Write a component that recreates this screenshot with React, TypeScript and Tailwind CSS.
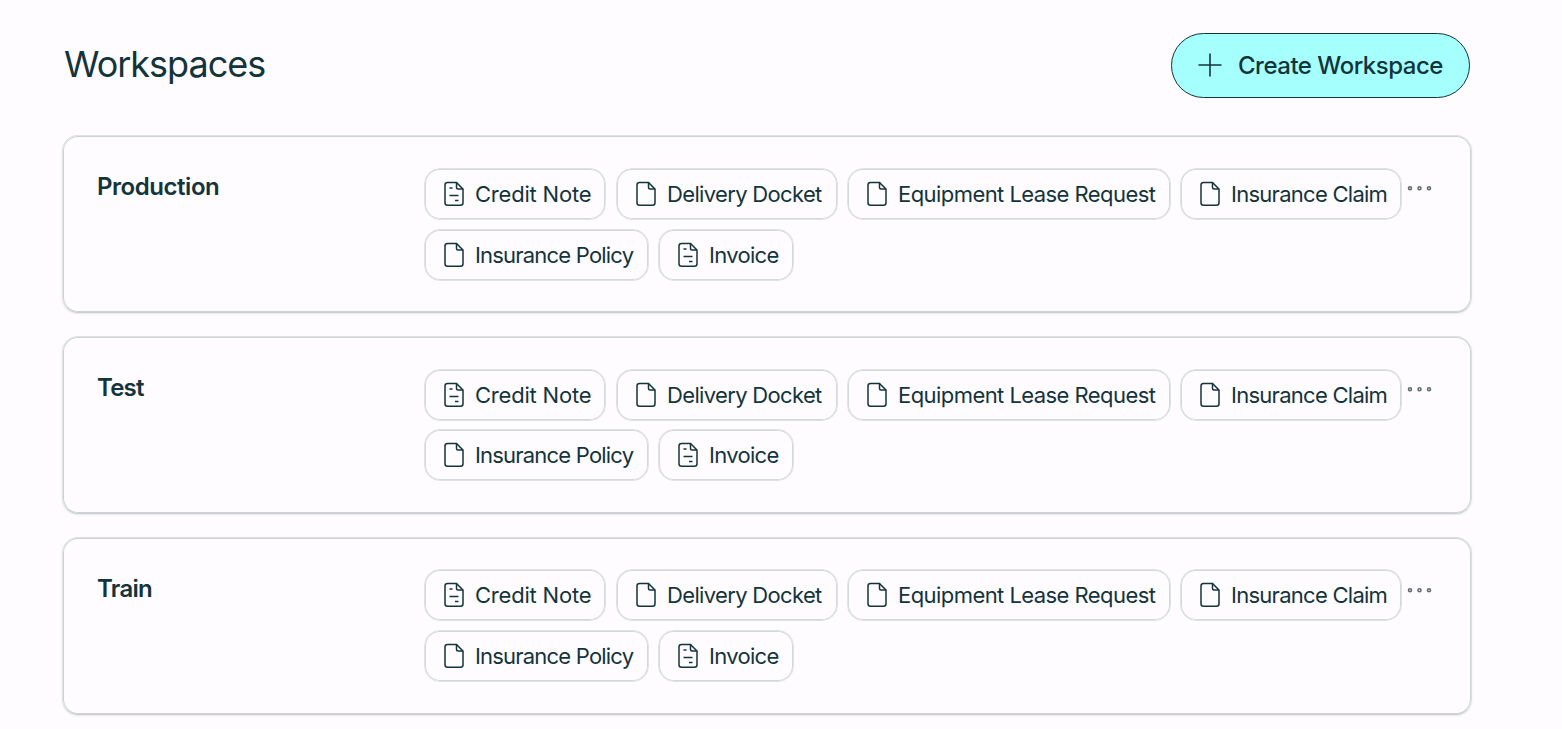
import React from 'react';

interface DocType {
  name: string;
  detailed?: boolean;
  box: string;
  text: string;
}

interface Workspace {
  name: string;
  title: string;
  content: string;
}

const docTypes: DocType[] = [
  { name: 'Credit Note', detailed: true, box: 'w-[182px] mr-[10px]', text: 'tracking-[-0.2px]' },
  { name: 'Delivery Docket', box: 'w-[222px] mr-[9px]', text: 'tracking-[-0.66px]' },
  { name: 'Equipment Lease Request', box: 'w-[324px] mr-[9px]', text: 'tracking-[-0.56px]' },
  { name: 'Insurance Claim', box: 'w-[222px]', text: 'tracking-[-0.73px]' },
  { name: 'Insurance Policy', box: 'w-[225px] mr-[9px]', text: 'tracking-[-0.8px]' },
  { name: 'Invoice', detailed: true, box: 'w-[136px]', text: 'tracking-[-0.7px]' }
];

const workspaces: Workspace[] = [
  { name: 'Production', title: 'tracking-[-0.45px]', content: 'gap-y-[9px]' },
  { name: 'Test', title: 'tracking-[-0.8px]', content: 'gap-y-[8px]' },
  { name: 'Train', title: 'tracking-[-0.7px]', content: '-mt-px gap-y-[9px]' }
];

function FileIcon({ detailed }: { detailed?: boolean }) {
  return (
    <svg className="w-5 h-[26px] shrink-0" viewBox="0 0 20 26" fill="none" stroke="currentColor" strokeWidth="1.5">
      <path d="M3.5 1.5H12.5L19 8V21.75Q19 24.25 16.5 24.25H3.5Q1 24.25 1 21.75V4Q1 1.5 3.5 1.5Z" />
      <path d="M12.5 1.5V6.5Q12.5 8 14 8H19" />
      {detailed && <path d="M5.5 7H8.5M5.5 14.5H14.5M11 19.5H14.5" />}
    </svg>
  );
}

function DocChip({ doc }: { doc: DocType }) {
  return (
    <div className={`${doc.box} h-[52px] flex items-center rounded-[16px] border border-[#dfe3e5] shadow-[inset_0_0_0_1px_#d3d8da] pl-[19px]`}>
      <FileIcon detailed={doc.detailed} />
      <span className={`${doc.text} ml-[11px] text-[22px] leading-[28px] whitespace-nowrap`}>{doc.name}</span>
    </div>
  );
}

function WorkspaceCard({ workspace }: { workspace: Workspace }) {
  return (
    <div className="h-[178px] flex rounded-[16px] border border-[#dde1e3] border-b-[#c9cfd1] pt-8 pl-[34px] shadow-[inset_0_0_0_1px_#cdd3d4,0_1px_2px_rgba(20,50,60,0.1)]">
      <h2 className={`${workspace.title} w-[327px] shrink-0 mt-[3px] text-[24px] leading-[32px] font-semibold`}>
        {workspace.name}
      </h2>
      <div className={`${workspace.content} w-[980px] shrink-0 flex flex-wrap content-start`}>
        {docTypes.map((doc) => (
          <DocChip key={doc.name} doc={doc} />
        ))}
      </div>
      <svg className="w-[26px] h-[6px] mt-[17px] ml-[3px] shrink-0" viewBox="0 0 26 6" fill="none" stroke="#626c70" strokeWidth="1.6">
        <circle cx="3" cy="3.25" r="1.5" />
        <circle cx="12.5" cy="3.25" r="1.5" />
        <circle cx="22" cy="3.25" r="1.5" />
      </svg>
    </div>
  );
}

export default function App() {
  return (
    <main className="h-[729px] overflow-hidden bg-[#fefcff] pt-[33px] pl-[62px] pr-[90px] font-['Inter',sans-serif] text-[#14343b]">
      <header className="h-[65px] mb-[37px] flex items-center justify-between">
        <h1 className="ml-[2px] -mt-[3px] text-[36px] leading-[44px] tracking-[-1px]">Workspaces</h1>
        <button className="w-[299px] h-[65px] mr-[2px] flex items-center rounded-full border border-[#14343b] bg-[#a5fffd] pl-[26px]">
          <svg className="w-6 h-6 -mt-px" viewBox="0 0 24 24" fill="none" stroke="currentColor" strokeWidth="1.6">
            <path d="M12 0.5V23.5M0.5 12H23.5" />
          </svg>
          <span className="ml-4 text-[24px] leading-[32px] tracking-[-0.5px] font-medium whitespace-nowrap">Create Workspace</span>
        </button>
      </header>
      <div className="flex flex-col gap-[23px]">
        {workspaces.map((workspace) => (
          <WorkspaceCard key={workspace.name} workspace={workspace} />
        ))}
      </div>
    </main>
  );
}
